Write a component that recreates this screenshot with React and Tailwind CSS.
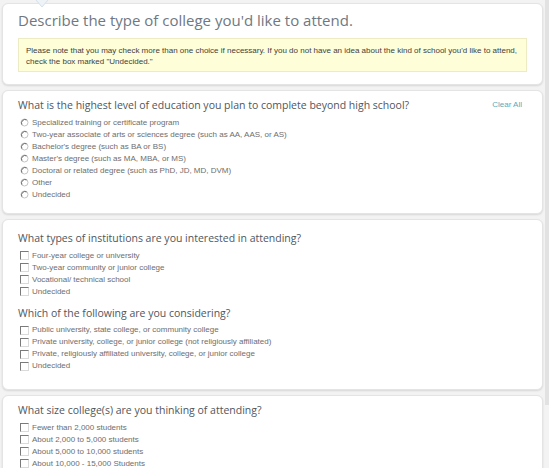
import React from "react";

const degrees = [
  "Specialized training or certificate program",
  "Two-year associate of arts or sciences degree (such as AA, AAS, or AS)",
  "Bachelor's degree (such as BA or BS)",
  "Master's degree (such as MA, MBA, or MS)",
  "Doctoral or related degree (such as PhD, JD, MD, DVM)",
  "Other",
  "Undecided",
];

const institutions = [
  "Four-year college or university",
  "Two-year community or junior college",
  "Vocational/ technical school",
  "Undecided",
];

const considering = [
  "Public university, state college, or community college",
  "Private university, college, or junior college (not religiously affiliated)",
  "Private, religiously affiliated university, college, or junior college",
  "Undecided",
];

const sizes = [
  "Fewer than 2,000 students",
  "About 2,000 to 5,000 students",
  "About 5,000 to 10,000 students",
  "About 10,000 - 15,000 Students",
];

const small = { fontFamily: '"Liberation Sans", Arial, sans-serif' };

// classic inset radio
const Radio = () => (
  <svg width="9" height="9" viewBox="0 0 9 9" className="shrink-0">
    <circle cx="4.5" cy="4.5" r="3.5" fill="#fff" stroke="#c4c4c4" strokeWidth="1" />
    <path d="M1.9 6.6 A3.5 3.5 0 0 1 6.6 1.9" fill="none" stroke="#666" strokeWidth="1" />
  </svg>
);

// classic inset checkbox
const Check = () => (
  <span className="w-[9px] h-[9px] shrink-0 bg-white border border-t-[#7a7a7a] border-l-[#7a7a7a] border-r-[#dadada] border-b-[#dadada]" />
);

const Option = ({ type, label }) => (
  <div className="flex items-center gap-[3px] h-[12px]">
    {type === "radio" ? <Radio /> : <Check />}
    <span className="text-[8px] text-[#6e6e6e] leading-none whitespace-nowrap">{label}</span>
  </div>
);

const Options = ({ type, items, className = "" }) => (
  <div className={`flex flex-col pl-[2px] ${className}`} style={small}>
    {items.map((d) => (
      <Option key={d} type={type} label={d} />
    ))}
  </div>
);

const Question = ({ children }) => (
  <h3 className="text-[10.5px] text-[#4f565d] leading-none">{children}</h3>
);

const Card = ({ className = "", children }) => (
  <div
    className={`bg-white rounded-[6px] border border-[#e4e4e4] shadow-[0_1px_2px_rgba(0,0,0,0.12)] ${className}`}
  >
    {children}
  </div>
);

export default function App() {
  return (
    <div
      className="w-[549px] h-[468px] overflow-hidden bg-[#f3f3f3] relative"
      style={{ fontFamily: '"Open Sans", "DejaVu Sans", sans-serif' }}
    >
      <svg width="14" height="8" viewBox="0 0 14 8" className="absolute left-[35px] top-0 z-10">
        <path d="M1 0 L7 7 L13 0" fill="#eef3f8" stroke="#d6e0ea" strokeWidth="1" />
      </svg>
      {/* grey strip on the right edge */}
      <div className="absolute right-0 top-0 w-[4px] h-[405px] bg-[#e2e2e2]" />
      <div className="w-[543px] pl-[2px] pt-[3px] flex flex-col gap-[5px]">
        <Card className="h-[82px] px-[15px] pt-[9px]">
          <h1 className="text-[15px] text-[#6f7882] leading-none">
            Describe the type of college you'd like to attend.
          </h1>
          <div className="mt-[10px] bg-[#fefed9] border border-[#ecebc4] px-[7px] py-[6px] h-[34px]">
            <p className="text-[8px] leading-[11px] text-[#3f3f3f]" style={small}>
              Please note that you may check more than one choice if necessary. If you do not have an idea about the kind of school you'd like to attend,
              check the box marked "Undecided."
            </p>
          </div>
        </Card>

        <Card className="h-[124px] px-[15px] pt-[9px]">
          <div className="flex items-start justify-between pr-[5px]">
            <Question>What is the highest level of education you plan to complete beyond high school?</Question>
            <span className="text-[8px] text-[#5aa9ba] leading-none mt-[1px]" style={small}>
              Clear All
            </span>
          </div>
          <Options type="radio" items={degrees} className="mt-[6px]" />
        </Card>

        <Card className="h-[171px] px-[15px] pt-[13px]">
          <Question>What types of institutions are you interested in attending?</Question>
          <Options type="check" items={institutions} className="mt-[6px]" />
          <div className="mt-[10px]">
            <Question>Which of the following are you considering?</Question>
          </div>
          <Options type="check" items={considering} className="mt-[6px]" />
        </Card>

        <Card className="h-[90px] px-[15px] pt-[9px]">
          <Question>What size college(s) are you thinking of attending?</Question>
          <Options type="check" items={sizes} className="mt-[6px]" />
        </Card>
      </div>
    </div>
  );
}
